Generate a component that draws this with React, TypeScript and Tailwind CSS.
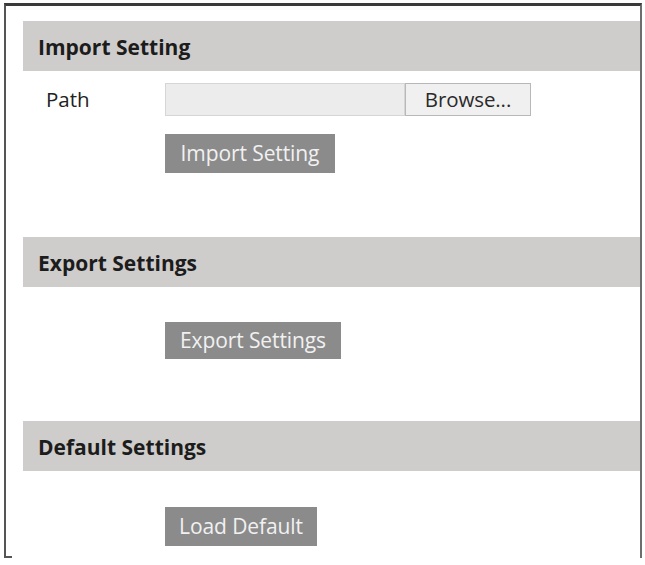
import React from "react";

const font = { fontFamily: '"Open Sans", "Noto Sans", sans-serif' };

function Band({ title }: { title: string }) {
  return (
    <div className="h-[50px] bg-[#cfcdcb] flex items-center pl-[15px] pt-[4px]">
      <span className="text-[21px] font-bold text-[#1c1c1c] tracking-[0px]">{title}</span>
    </div>
  );
}

function GrayButton({ label, w, h }: { label: string; w: string; h: string }) {
  return (
    <div className="pl-[142px]">
      <button className={`${w} ${h} bg-[#8b8b8b] text-[#f1f1f1] text-[21px] flex items-center justify-center tracking-[-0.1px]`}>
        {label}
      </button>
    </div>
  );
}

export default function App() {
  return (
    <div className="w-[645px] h-[565px] bg-white relative overflow-hidden" style={font}>
      <div className="ml-[4px] mt-[3px] w-[638px] h-[555px] border-t-[3px] border-l-2 border-r-2 border-t-[#3a3a3a] border-l-[#555555] border-r-[#6e6e6e] pt-[15px] pl-[17px]">
        <Band title="Import Setting" />
        <div className="mt-[12px] h-[33px] flex items-center">
          <span className="w-[142px] pl-[23px] text-[20.5px] text-[#222]">Path</span>
          <div className="w-[240px] h-[33px] bg-[#ececec] border border-[#d6d6d6]" />
          <button className="w-[126px] h-[33px] bg-[#f0f0f0] border border-[#b8b8b8] text-[20.5px] leading-none text-[#2a2a2a] tracking-[-0.1px]">
            Browse...
          </button>
        </div>
        <div className="mt-[18px]">
          <GrayButton label="Import Setting" w="w-[170px]" h="h-[39px]" />
        </div>
        <div className="mt-[64px]">
          <Band title="Export Settings" />
        </div>
        <div className="mt-[35px]">
          <GrayButton label="Export Settings" w="w-[176px]" h="h-[37px]" />
        </div>
        <div className="mt-[62px]">
          <Band title="Default Settings" />
        </div>
        <div className="mt-[36px]">
          <GrayButton label="Load Default" w="w-[152px]" h="h-[39px]" />
        </div>
      </div>
      <div className="absolute left-[4px] top-[556px] w-[8px] h-[2px] bg-[#555555]" />
    </div>
  );
}
